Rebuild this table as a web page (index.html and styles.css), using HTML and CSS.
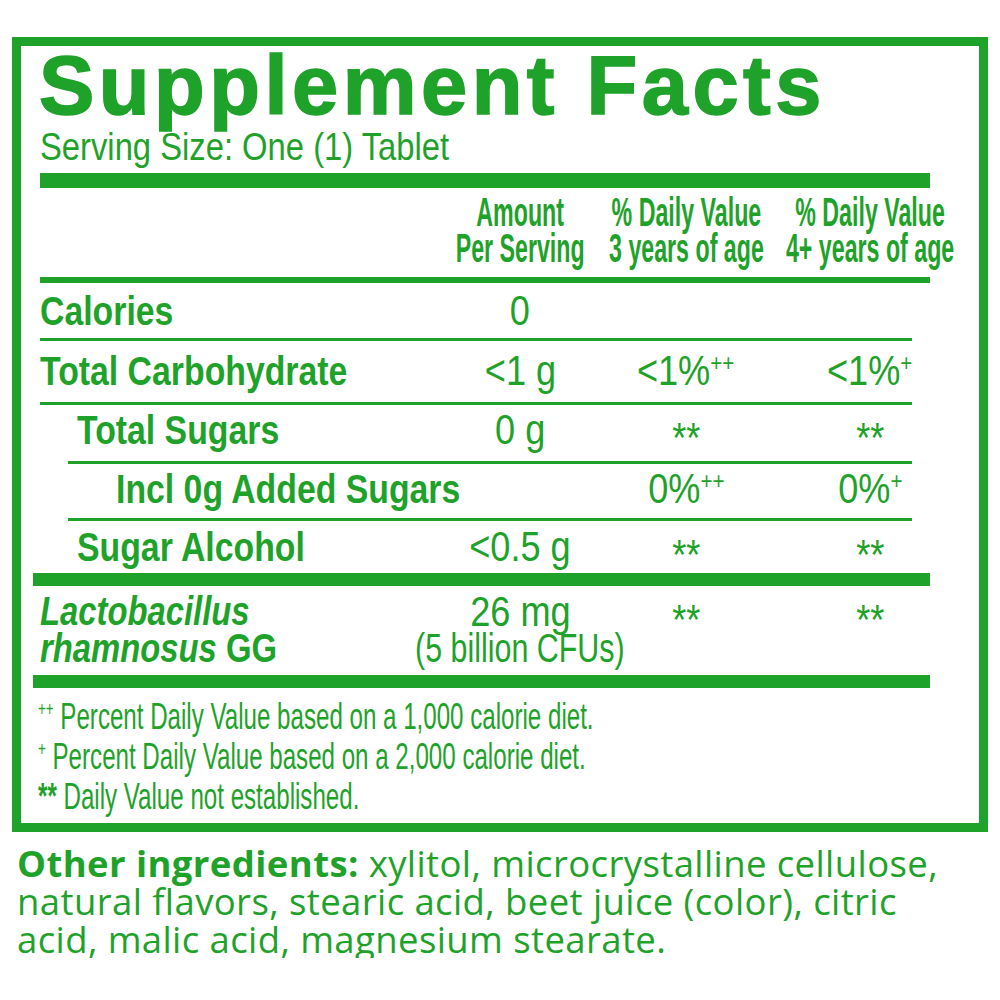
FILE: index.html
```html
<!DOCTYPE html>
<html lang="en">
<head>
  <meta charset="UTF-8">
  <title>Supplement Facts</title>
  <link rel="stylesheet" href="styles.css">
</head>
<body>
  <div class="facts">
    <h1 class="title">Supplement Facts</h1>
    <div class="serving"><span class="sq-serving">Serving Size: One (1) Tablet</span></div>
    <div class="bar"></div>

    <div class="row head">
      <div></div>
      <div class="cell"><span class="sq-head">Amount<br>Per Serving</span></div>
      <div class="cell"><span class="sq-head">% Daily Value<br>3 years of age</span></div>
      <div class="cell"><span class="sq-head">% Daily Value<br>4+ years of age</span></div>
    </div>

    <div class="row thin r-cal">
      <div class="name"><span class="sq-name">Calories</span></div>
      <div class="cell"><span class="sq-val">0</span></div>
      <div class="cell"></div>
      <div class="cell"></div>
    </div>
    <div class="row thin r-carb">
      <div class="name"><span class="sq-name">Total Carbohydrate</span></div>
      <div class="cell"><span class="sq-val">&lt;1 g</span></div>
      <div class="cell"><span class="sq-val">&lt;1%<sup>++</sup></span></div>
      <div class="cell"><span class="sq-val">&lt;1%<sup>+</sup></span></div>
    </div>
    <div class="row thin sub r-sug">
      <div class="name"><span class="sq-name">Total Sugars</span></div>
      <div class="cell"><span class="sq-val">0 g</span></div>
      <div class="cell"><span class="sq-val"><span class="ast">**</span></span></div>
      <div class="cell"><span class="sq-val"><span class="ast">**</span></span></div>
    </div>
    <div class="row thin sub r-add">
      <div class="name deep"><span class="sq-name">Incl 0g Added Sugars</span></div>
      <div class="cell"></div>
      <div class="cell"><span class="sq-val">0%<sup>++</sup></span></div>
      <div class="cell"><span class="sq-val">0%<sup>+</sup></span></div>
    </div>
    <div class="row sub r-alc">
      <div class="name"><span class="sq-name">Sugar Alcohol</span></div>
      <div class="cell"><span class="sq-val">&lt;0.5 g</span></div>
      <div class="cell"><span class="sq-val"><span class="ast">**</span></span></div>
      <div class="cell"><span class="sq-val"><span class="ast">**</span></span></div>
    </div>
    <div class="bar wide"></div>

    <div class="row r-lacto">
      <div class="name"><span class="sq-name"><i>Lactobacillus<br>rhamnosus</i> GG</span></div>
      <div class="cell">
        <div class="stack">
          <span class="sq-val">26 mg</span>
          <span class="sq-cfu">(5 billion CFUs)</span>
        </div>
      </div>
      <div class="cell"><span class="sq-val"><span class="ast">**</span></span></div>
      <div class="cell"><span class="sq-val"><span class="ast">**</span></span></div>
    </div>
    <div class="bar wide"></div>

    <div class="notes">
      <div><span class="sq-note"><sup>++</sup> Percent Daily Value based on a 1,000 calorie diet.</span></div>
      <div><span class="sq-note"><sup>+</sup> Percent Daily Value based on a 2,000 calorie diet.</span></div>
      <div><span class="sq-note"><b>**</b> Daily Value not established.</span></div>
    </div>
  </div>

  <p class="ingredients">
    <b>Other ingredients:</b> xylitol, microcrystalline cellulose,<br>
    natural flavors, stearic acid, beet juice (color), citric<br>
    acid, malic acid, magnesium stearate.
  </p>
</body>
</html>
```

FILE: styles.css
```css
body {
  margin: 0;
  background: #fff;
  color: #1fa22a;
  font-family: "Liberation Sans", Arial, sans-serif;
}

.facts {
  box-sizing: border-box;
  width: 976px;
  margin: 37px 0 0 12px;
  border: 9px solid #1fa22a;
  padding: 0 49px 0 19px;
}

.title {
  margin: 0 0 0 -1px;
  font-size: 83px;
  line-height: 80px;
  font-weight: bold;
  letter-spacing: 4.5px;
  -webkit-text-stroke: 1.6px #1fa22a;
  white-space: nowrap;
}

.serving {
  font-size: 39px;
  line-height: 41px;
  white-space: nowrap;
}

.bar {
  height: 15px;
  margin-top: 6px;
  background: #1fa22a;
}
.bar.wide {
  height: 13px;
  margin: 0 0 0 -7px;
}

/* table rows: label | amount | dv 3 yrs | dv 4+ yrs */
.row {
  display: grid;
  grid-template-columns: 400px 160px 172px 196px;
  align-items: start;
  white-space: nowrap;
}
.row.thin {
  margin-right: 18px;
  border-bottom: 3px solid #1fa22a;
}
.row.sub {
  margin-left: 28px;
  grid-template-columns: 372px 160px 172px 196px;
}
.row.sub .name {
  padding-left: 9px;
}
.row.sub .name.deep {
  padding-left: 48px;
}

.head {
  padding: 6px 0 11px;
  border-bottom: 6px solid #1fa22a;
}

.r-cal { padding: 8px 0 7px; }
.r-carb { padding: 10px 0 11px; }
.r-sug { padding: 5px 0 11px; }
.r-add { padding: 5px 0 9px; }
.r-alc { padding: 6px 0 6px; }
.r-lacto { padding: 7px 0 8px; }

.cell {
  display: flex;
  justify-content: center;
}
.name {
  display: flex;
}
.stack {
  display: flex;
  flex-direction: column;
  align-items: center;
}

/* condensed text, squeezed from Liberation Sans */
.sq-serving,
.sq-head,
.sq-name,
.sq-val,
.sq-cfu,
.sq-note {
  display: inline-block;
}
.sq-serving {
  transform: scaleX(0.84);
  transform-origin: left;
}
.sq-head {
  font-size: 40px;
  line-height: 36px;
  font-weight: bold;
  text-align: center;
  transform: scaleX(0.58);
}
.sq-name {
  font-size: 40px;
  line-height: 40px;
  font-weight: bold;
  transform: scaleX(0.845);
  transform-origin: left;
}
.r-lacto .sq-name {
  transform: scaleX(0.82);
}
.r-lacto .sq-name,
.r-lacto .sq-val,
.r-lacto .sq-cfu {
  line-height: 37px;
}
.sq-val {
  font-size: 42px;
  line-height: 40px;
  transform: scaleX(0.86);
}
.sq-cfu {
  font-size: 40px;
  transform: scaleX(0.76);
}

sup {
  font-size: 24px;
  line-height: 0;
  vertical-align: 14px;
}
.ast {
  line-height: 0;
  vertical-align: -8px;
}

.notes {
  padding: 9px 0 6px;
  margin-left: -2px;
  white-space: nowrap;
}
.sq-note {
  font-size: 36px;
  line-height: 40px;
  transform: scaleX(0.67);
  transform-origin: left;
}
.sq-note sup {
  font-size: 20px;
  vertical-align: 13px;
}

.ingredients {
  margin: 12px 0 0 17px;
  font-family: "Open Sans", sans-serif;
  font-size: 36.5px;
  font-weight: 500;
  line-height: 38px;
  letter-spacing: 0.4px;
  white-space: nowrap;
}
.ingredients b {
  font-weight: 700;
}
```
